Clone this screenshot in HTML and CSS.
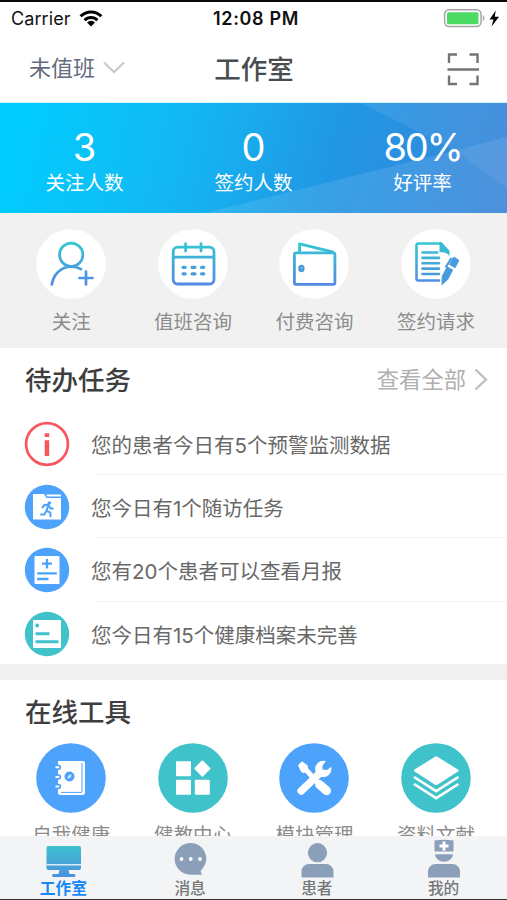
FILE: index.html
```html
<!DOCTYPE html>
<html lang="zh-CN">
<head>
<meta charset="utf-8">
<title>工作室</title>
<link rel="stylesheet" href="styles.css">
</head>
<body>
<svg class="defs" width="0" height="0" aria-hidden="true">
  <defs>
    <linearGradient id="stroke" gradientUnits="userSpaceOnUse" x1="0" y1="14" x2="0" y2="57">
      <stop offset="0" stop-color="#34c6d2"/><stop offset="1" stop-color="#5487e4"/>
    </linearGradient>
    <linearGradient id="screen" x1="0" y1="0" x2="0" y2="1">
      <stop offset="0" stop-color="#3fc0cf"/><stop offset="1" stop-color="#4a92dd"/>
    </linearGradient>
  </defs>
</svg>
<div class="app">
  <header class="status">
    <div class="carrier"><span>Carrier</span>
      <svg width="24" height="17" viewBox="0 0 24 17"><g fill="none" stroke="#000" stroke-width="3"><path d="M1.600 6.200a14.700 14.700 0 0 1 20.800 0"/><path d="M5.600 10.200a9 9 0 0 1 12.800 0"/></g><path d="M8 12.400a5.600 5.600 0 0 1 8 0L12 16.400z"/></svg>
    </div>
    <div class="clock">12:08 PM</div>
    <div class="power">
      <svg width="56" height="20" viewBox="0 0 56 20"><rect x="-.4" y=".8" width="36.500" height="16.800" rx="4.500" fill="#fff" stroke="#a5a5a5" stroke-width="1.500"/><rect x="2" y="3.200" width="31.500" height="12" rx="1.500" fill="#4cd964"/><path d="M37.800 6.300c2.200 1 2.200 4.800 0 5.800z" fill="#a5a5a5"/><path d="M50.700 1.400L44.600 10.400h3.900l-2 7 7.600-9.700h-4.300z"/></svg>
    </div>
  </header>
  <nav class="nav">
    <div class="duty"><span>未值班</span><svg width="24" height="14" viewBox="0 0 24 14"><path d="M1 1.500l10 9.500L21 1.500" fill="none" stroke="#c9c9c9" stroke-width="2.200"/></svg></div>
    <h1>工作室</h1>
    <div class="scan"><svg width="32" height="34" viewBox="0 0 32 34" fill="none" stroke="#747474" stroke-width="2.400"><path d="M2 11V2.500h8M22.500 2.500h8v8.500M2 23.500v8.500h8M22.500 32h8v-8.500M.5 17.500h31.500"/></svg></div>
  </nav>
  <section class="banner">
    <svg class="facets" viewBox="0 0 507 111" preserveAspectRatio="none"><path d="M361 0H507V34L455 48z" fill="#fff" opacity=".08"/><path d="M205 111L455 48 507 86V111z" fill="#fff" opacity=".10"/><path d="M455 48L507 34V86z" fill="#fff" opacity=".16"/></svg>
    <div class="stat"><b>3</b><span>关注人数</span></div>
    <div class="stat"><b>0</b><span>签约人数</span></div>
    <div class="stat"><b class="rate">80%</b><span>好评率</span></div>
  </section>
  <section class="quick">
    <div class="entry"><svg width="70" height="70" viewBox="0 0 70 70"><circle cx="35" cy="35" r="34.800" fill="#fff"/><g fill="none" stroke="url(#stroke)" stroke-width="2.700" stroke-linecap="round"><circle cx="35.200" cy="25.800" r="11.700"/><path d="M15.800 55.500C17.500 45 25 37.800 35 37.600c4 0 7 .8 10 2.600M50 42.500v13M43.500 49h13"/></g></svg><span>关注</span></div>
    <div class="entry"><svg width="70" height="70" viewBox="0 0 70 70"><circle cx="35" cy="35" r="34.800" fill="#fff"/><g fill="none" stroke="url(#stroke)" stroke-width="2.800" stroke-linecap="round"><rect x="15.200" y="18.200" width="40.800" height="36.800" rx="4.500"/><path d="M15.500 28.200H55.500M27.600 14.700v7.300M43 14.700v7.300"/><path stroke-width="3.200" d="M25 38.300h2.200M34 38.300h3M43.500 38.300h2.300M25 44.800h2.200M34 44.800h3M43.500 44.800h2.300"/></g></svg><span>值班咨询</span></div>
    <div class="entry"><svg width="70" height="70" viewBox="0 0 70 70"><circle cx="35" cy="35" r="34.800" fill="#fff"/><g fill="none" stroke="url(#stroke)" stroke-width="2.800" stroke-linejoin="round"><rect x="15.400" y="23.800" width="40.500" height="31.500" rx="1.500"/><path d="M20.600 23.500V14.800L54.500 23.200"/></g><ellipse cx="22.400" cy="39.500" rx="3.200" ry="3.700" fill="#4a9bdd"/><path d="M22.300 38.300v2" stroke="#9acaed"/></svg><span>付费咨询</span></div>
    <div class="entry"><svg width="70" height="70" viewBox="0 0 70 70"><circle cx="35" cy="35" r="34.800" fill="#fff"/><g fill="none" stroke="url(#stroke)" stroke-width="2.600" stroke-linecap="round" stroke-linejoin="round"><path d="M38 51.500H17.500a2 2 0 0 1-2-2V16.500a2 2 0 0 1 2-2H39.500M21.500 23.500h14.800M21.500 28.900h16.500M21.500 34.200h16.500M21.500 39.600h16.500M21.500 45h16.500"/></g><path d="M38.500 13.300h2.200l7.800 8.400V28c-1.200-3.500-3-4.500-10-4.700z" fill="#39bad3"/><path d="M52 28.300q1-.8 2 0l3.500 2.200q1 .7.400 1.900l-3.700 6.900-6.200-3.500zM46 37.300l6.200 3.500-5 9.700-6.700 6 .2-9zM49.500 28.500l1.700 1-5.600 9.500-2-1z" fill="#4a9bdd"/></svg><span>签约请求</span></div>
  </section>
  <section class="tasks">
    <div class="head"><h2>待办任务</h2><div class="more"><span>查看全部</span><svg width="14" height="24" viewBox="0 0 14 24"><path d="M1.500 1.500l10.500 10L1.500 21.500" fill="none" stroke="#bcbcbc" stroke-width="2.200"/></svg></div></div>
    <div class="task"><svg width="46" height="46" viewBox="0 0 46 46"><circle cx="23" cy="23" r="20.900" fill="none" stroke="#f8575e" stroke-width="2.700"/><path d="M20.700 12.300h4.500v3.800h-4.500zM20.700 19.300h4.500V35h-4.500z" fill="#f8575e"/></svg><p>您的患者今日有5个预警监测数据</p></div>
    <div class="task"><svg width="46" height="46" viewBox="0 0 46 46"><circle cx="23" cy="23" r="22.200" fill="#4da2fb"/><path d="M9 10H20l2.500 4H37V35.500H9zM22 10.500H37v2H23.300z" fill="#fff"/><circle cx="25.300" cy="19" r="1.800" fill="#4da2fb"/><path d="M18 24l2.500-3 4-.3-2 6 3.800 2 .3 4.500M22.300 27l-2 3.500h-4M24.500 21l2 3.500h3" fill="none" stroke="#4da2fb" stroke-width="2"/></svg><p>您今日有1个随访任务</p></div>
    <div class="task"><svg width="46" height="46" viewBox="0 0 46 46"><circle cx="23" cy="23" r="22.200" fill="#4da2fb"/><rect x="10.500" y="9" width="25" height="28" rx="1" fill="#fff"/><path d="M23 12v9.500M18 16.700h10M13.200 26.300h19.600M13.200 32h11.300" stroke="#4da2fb" stroke-width="2.300"/></svg><p>您有20个患者可以查看月报</p></div>
    <div class="task"><svg width="46" height="46" viewBox="0 0 46 46"><circle cx="23" cy="23" r="22.200" fill="#40c2ca"/><rect x="9" y="9" width="28" height="28" rx="1" fill="#fff"/><circle cx="13.200" cy="14.500" r="1.900" fill="#40c2ca"/><path d="M11.500 22.700h14M11.500 30.700h23" stroke="#40c2ca" stroke-width="3"/></svg><p>您今日有15个健康档案未完善</p></div>
  </section>
  <section class="tools">
    <h2>在线工具</h2>
    <div class="grid">
      <div class="entry"><svg width="70" height="70" viewBox="0 0 70 70"><circle cx="35" cy="35" r="34.800" fill="#4da2fb"/><path d="M22 18H47a2 2 0 0 1 2 2V50a2 2 0 0 1-2 2H24a2 2 0 0 1-2-2z" fill="#fff"/><path d="M46 20v28.400a1 1 0 0 1-1 1H25" fill="none" stroke="#4da2fb" stroke-width="1"/><circle cx="33.500" cy="33.500" r="5" fill="#4da2fb"/><path d="M31.200 35.900l1.200-3.500 3.400-1.400-1.200 3.500z" fill="#d4e9ff"/><g fill="#4da2fb"><circle cx="22.300" cy="24.300" r="2.800"/><circle cx="22.300" cy="34" r="2.800"/><circle cx="22.300" cy="43.500" r="2.800"/></g><path d="M19.500 24.300h3.700M19.500 34h3.700M19.500 43.500h3.700" stroke="#fff" stroke-width="2"/></svg><span>自我健康</span></div>
      <div class="entry"><svg width="70" height="70" viewBox="0 0 70 70"><circle cx="35" cy="35" r="34.800" fill="#40c2ca"/><g fill="#fff"><rect x="18" y="18.200" width="15" height="15" rx="1"/><rect x="18" y="36.700" width="15" height="15" rx="1"/><rect x="36.800" y="36.700" width="15" height="15" rx="1"/><path d="M43.800 17.600q.6-.4 1.200 0l7.300 7.500q.4.500 0 1l-7.300 7.500q-.6.400-1.200 0l-7.300-7.500q-.4-.5 0-1z"/></g></svg><span>健教中心</span></div>
      <div class="entry"><svg width="70" height="70" viewBox="0 0 70 70"><circle cx="35" cy="35" r="34.800" fill="#4da2fb"/><g stroke="#fff" fill="none"><path d="M22.200 48L42 29" stroke-width="7.500" stroke-linecap="round"/><path d="M40.500 41.500l7 6.200" stroke-width="9" stroke-linecap="round"/><path d="M24 23.500L40 41" stroke-width="5"/></g><path d="M19 22.300l4-4 5.500 4 .7 4-4.200 4-3-1.500z" fill="#fff"/><circle cx="44.300" cy="26" r="8.200" fill="#fff"/><path d="M43.600 26.500l-.3-3.500L48.500 16l6 6-6.500 5z" fill="#4da2fb"/></svg><span>模块管理</span></div>
      <div class="entry"><svg width="70" height="70" viewBox="0 0 70 70"><circle cx="35" cy="35" r="34.800" fill="#40c2ca"/><path d="M13.200 26.800L34 13.700q1.200-.7 2.400 0L57.300 26.800q.7.700 0 1.400L36.400 41.700q-1.200.7-2.400 0L13.200 28.200q-.7-.7 0-1.400z" fill="#fff"/><path d="M13 34l22.200 14.200 22.200-14.200M13 41l22.200 14.200 22.200-14.200" fill="none" stroke="#fff" stroke-width="2.600"/></svg><span>资料文献</span></div>
    </div>
  </section>
  <footer class="tabs">
    <div class="tab active"><svg width="38" height="38" viewBox="0 0 38 38"><path d="M2.500 7a2 2 0 0 1 2-2h30.500a2 2 0 0 1 2 2v20a2 2 0 0 1-2 2H24.500l1 4H30a1.500 1.500 0 0 1 0 3h-20.500a1.500 1.500 0 0 1 0-3H14.500l1-4H4.500a2 2 0 0 1-2-2z" fill="url(#screen)"/><path d="M2.500 23.800h34.500" stroke="#dcecf7" stroke-width="1.500"/></svg><span>工作室</span></div>
    <div class="tab"><svg width="38" height="38" viewBox="0 0 38 38"><path d="M19.500 2a15.600 15.600 0 0 1 12.500 25l-2.500 3 1.500 3.700H19.500a15.800 15.800 0 0 1 0-31.700z" fill="#8ba0b8"/><g fill="#fff"><circle cx="10.500" cy="18" r="1.900"/><circle cx="19.700" cy="18" r="1.900"/><circle cx="29" cy="18" r="1.900"/></g></svg><span>消息</span></div>
    <div class="tab"><svg width="38" height="38" viewBox="0 0 38 38"><circle cx="19.500" cy="11.700" r="9.600" fill="#8ba0b8"/><path d="M3.500 36.500V30.500a7.500 7.500 0 0 1 7.500-7.500h17a7.500 7.500 0 0 1 7.500 7.500v6z" fill="#8ba0b8"/></svg><span>患者</span></div>
    <div class="tab"><svg width="38" height="38" viewBox="0 0 38 38"><g fill="#8ba0b8"><path d="M9.500-.5q9.500-1.500 19 0V10.500h-19zM10 13.200h18a9 7.500 0 0 1-18 0z"/><path d="M3 36.500V30.500a7.500 7.500 0 0 1 7.500-7.500h17a7.500 7.500 0 0 1 7.500 7.500v6z"/></g><path d="M19 .5v9M14.500 5h9" stroke="#fff" stroke-width="3"/></svg><span>我的</span></div>
  </footer>
</div>
</body>
</html>
```
FILE: styles.css
```css
* { box-sizing: border-box; margin: 0; padding: 0; }
body {
  background: #fff;
  font-family: Inter, "Noto Sans CJK SC", sans-serif;
  overflow: hidden;
}
svg { display: block; flex: none; overflow: visible; }
.defs { position: absolute; }
.app {
  width: 507px;
  height: 900px;
  display: flex;
  flex-direction: column;
  border-top: 2px solid #0c0c0c;
  border-bottom: 1px solid #333;
}
.status {
  height: 33px;
  flex: none;
  display: grid;
  grid-template-columns: 1fr auto 1fr;
  align-items: center;
  padding: 0 6px 0 11px;
  color: #111;
}
.carrier { display: flex; align-items: center; gap: 8px; font-size: 18px; line-height: 33px; letter-spacing: .1px; }
.clock { font-size: 18px; font-weight: 600; line-height: 33px; letter-spacing: .65px; }
.power { display: flex; justify-content: flex-end; }
.nav {
  height: 67px;
  flex: none;
  display: grid;
  grid-template-columns: 1fr auto 1fr;
  align-items: center;
  padding: 0 28px 0 29px;
}
.duty { display: flex; align-items: center; gap: 8px; font-size: 22px; line-height: 32px; color: #646b7e; }
.duty span { margin-top: -2px; }
.duty svg { margin-top: -2px; }
h1 { font-size: 26.500px; line-height: 36px; font-weight: 500; color: #4a4d50; }
.scan { display: flex; justify-content: flex-end; }
.banner {
  height: 111px;
  flex: none;
  position: relative;
  display: grid;
  grid-template-columns: repeat(3, 1fr);
  border-top: 1px solid #d5f1fb;
  background: linear-gradient(105deg, #00cdff 3%, #13b8f3 35%, #2197e4 65%, #3a84d8 100%);
}
.facets { position: absolute; inset: 0; width: 100%; height: 100%; }
.stat {
  position: relative;
  display: flex;
  flex-direction: column;
  align-items: center;
  padding-top: 22px;
  color: #fff;
}
.stat b { font-size: 38px; line-height: 44px; font-weight: 400; }
.stat .rate { letter-spacing: -2.200px; }
.stat span { font-size: 19.500px; line-height: 28px; }
.quick {
  height: 135px;
  flex: none;
  display: grid;
  grid-template-columns: repeat(4, 121.600px);
  padding: 16px 0 0 10.500px;
  background: #f1f1f1;
}
.entry { display: flex; flex-direction: column; align-items: center; gap: 9px; }
.entry span { font-size: 19.500px; line-height: 28px; color: #8c8c8c; white-space: nowrap; }
h2 { font-size: 26.500px; line-height: 36px; font-weight: 500; color: #3e3e3e; }
.tasks {
  height: 332px;
  flex: none;
  border-bottom: 16px solid #f0f0f0;
}
.head {
  height: 64px;
  display: flex;
  justify-content: space-between;
  align-items: center;
  padding: 0 19px 0 25px;
}
.more { display: flex; align-items: center; gap: 8px; font-size: 22.300px; line-height: 32px; color: #b0b0b0; }
.task {
  height: 63.200px;
  display: grid;
  grid-template-columns: 46px 1fr;
  align-items: center;
  column-gap: 21px;
  padding-left: 24px;
}
.task svg { margin-top: 1px; }
.task p {
  height: 63.200px;
  font-size: 20.500px;
  line-height: 68px;
  color: #686868;
  background: linear-gradient(#f3f3f3, #f3f3f3) 5px 100% / 100% 1px no-repeat;
}
.tools { flex: 1; min-height: 0; overflow: hidden; padding-top: 14px; }
.tools h2 { padding-left: 25px; }
.grid { display: grid; grid-template-columns: repeat(4, 121.600px); padding: 13px 0 0 10.500px; }
.grid .entry { gap: 8px; }
.tabs {
  height: 63px;
  flex: none;
  display: grid;
  grid-template-columns: repeat(4, 1fr);
  background: #f2f4f6;
}
.tab { display: flex; flex-direction: column; align-items: center; padding-top: 5px; font-size: 15.700px; line-height: 20px; font-weight: 500; color: #777; }
.active { color: #1788f5; font-weight: 700; }
```
